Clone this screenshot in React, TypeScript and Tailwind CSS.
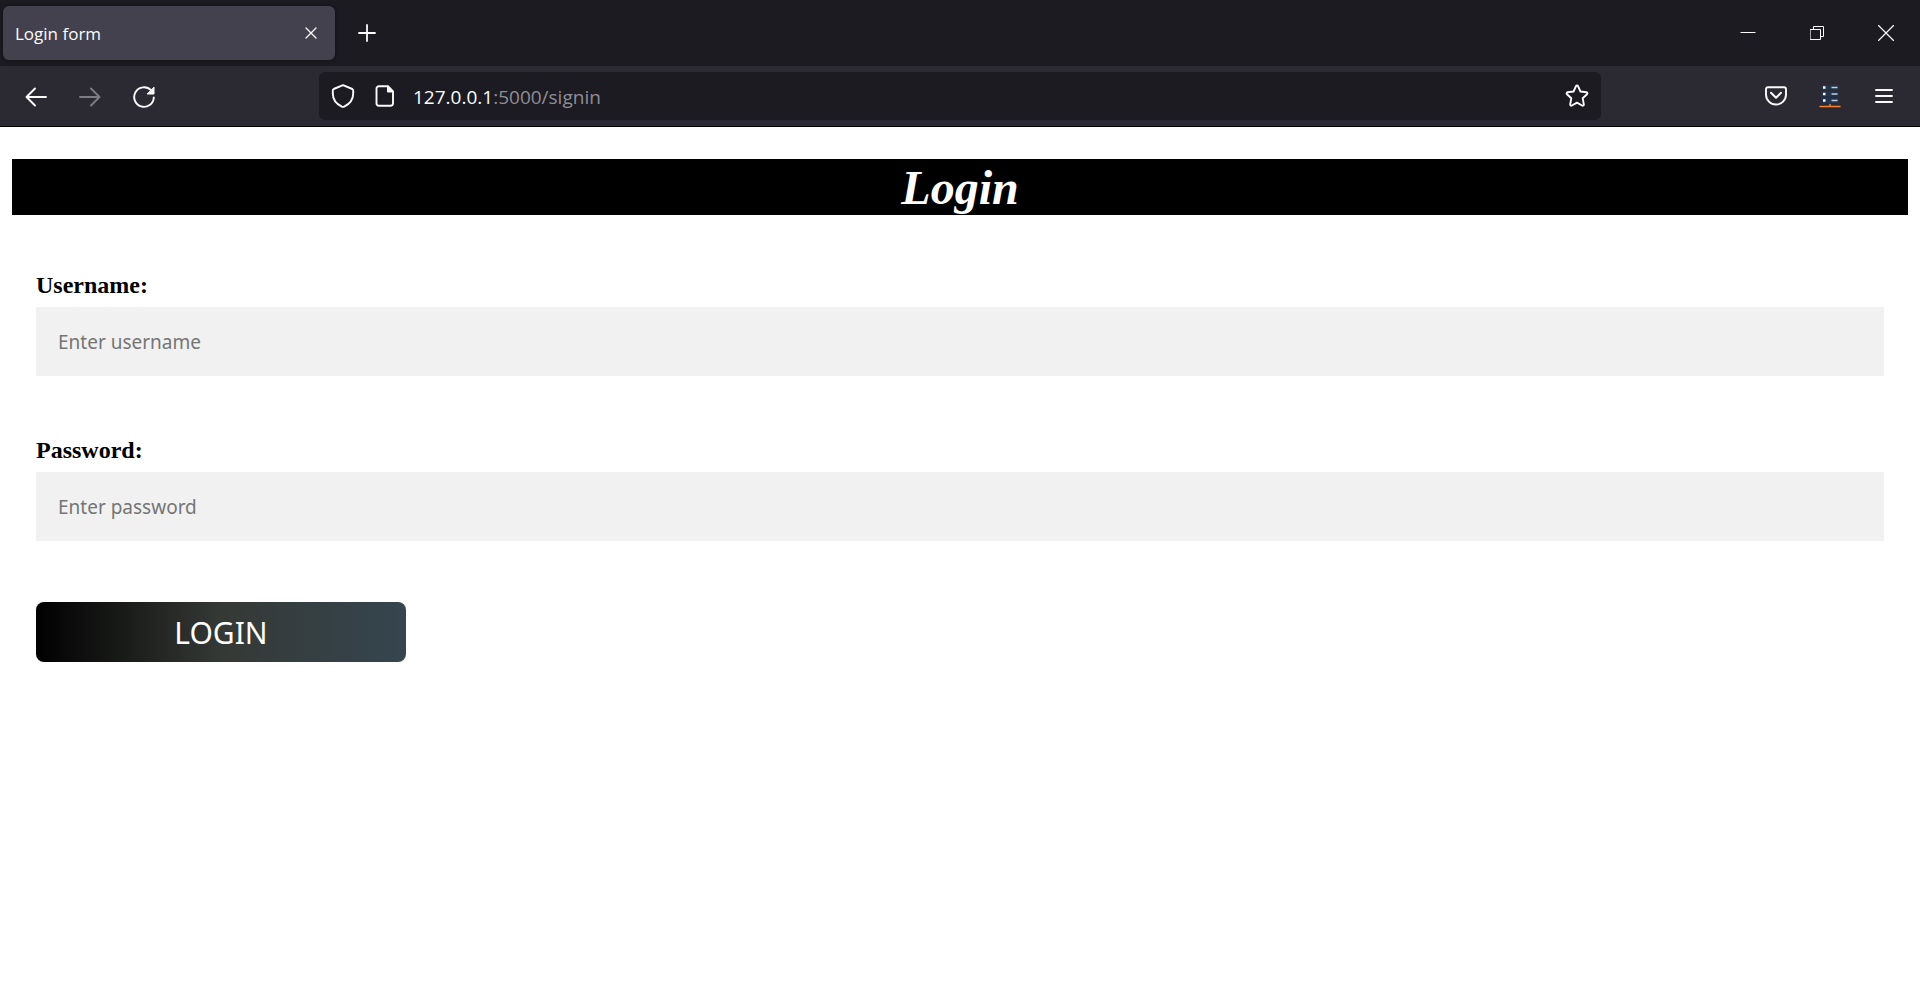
import React from "react";

type IconProps = { className?: string; children: React.ReactNode; box: string };

function Icon({ className = "", children, box }: IconProps) {
  return (
    <svg
      viewBox={box}
      fill="none"
      stroke="currentColor"
      strokeLinecap="round"
      strokeLinejoin="round"
      aria-hidden="true"
      className={`block shrink-0 ${className}`}
    >
      {children}
    </svg>
  );
}

function IconButton({
  label,
  className = "",
  children,
}: {
  label: string;
  className?: string;
  children: React.ReactNode;
}) {
  return (
    <button type="button" aria-label={label} className={`flex items-center justify-center ${className}`}>
      {children}
    </button>
  );
}

function TabBar() {
  return (
    <div className="flex h-[66px] items-center bg-[#1c1b22]">
      <div className="ml-[3px] flex h-[54px] w-[332px] items-center justify-between rounded-md bg-[#42414d] pr-2 pl-3 shadow-[0_0_4px_rgba(0,0,0,0.5)]">
        <span className="pt-0.5 text-[17px] leading-6">Login form</span>
        <IconButton label="Close tab" className="size-8">
          <Icon box="0 0 12 12" className="size-3">
            <path d="M1 1l10 10M11 1L1 11" strokeWidth="1.3" />
          </Icon>
        </IconButton>
      </div>
      <IconButton label="New tab" className="ml-4 size-8">
        <Icon box="0 0 18 18" className="size-[18px]">
          <path d="M9 1v16M1 9h16" strokeWidth="1.8" />
        </Icon>
      </IconButton>
      <div className="ml-auto flex h-full">
        <IconButton label="Minimize" className="w-[68px]">
          <Icon box="0 0 16 16" className="size-4">
            <path d="M0.5 7.5h15" strokeWidth="1" strokeLinecap="butt" />
          </Icon>
        </IconButton>
        <IconButton label="Restore" className="w-[70px]">
          <Icon box="0 0 14 14" className="size-3.5">
            <path d="M0.5 3.5h10v10h-10zM3.5 3.5v-3h10v10h-3" strokeWidth="1" strokeLinejoin="miter" />
          </Icon>
        </IconButton>
        <IconButton label="Close window" className="w-[68px]">
          <Icon box="0 0 16 16" className="size-4">
            <path d="M0.5 0.5l15 15M15.5 0.5l-15 15" strokeWidth="1.2" />
          </Icon>
        </IconButton>
      </div>
    </div>
  );
}

function Toolbar() {
  return (
    <div className="flex h-[61px] items-center border-b border-black bg-[#2b2a33]">
      <div className="flex w-[319px] shrink-0 items-center gap-[6px] pt-0.5 pl-3">
        <IconButton label="Back" className="size-12">
          <Icon box="0 0 22 20" className="h-5 w-[22px]">
            <path d="M1.5 10h19.5M10 1.5L1.5 10l8.5 8.5" strokeWidth="1.9" />
          </Icon>
        </IconButton>
        <IconButton label="Forward" className="size-12 text-[#7d7c83]">
          <Icon box="0 0 22 20" className="h-5 w-[22px]">
            <path d="M1 10h19.5M12 1.5l8.5 8.5l-8.5 8.5" strokeWidth="1.9" />
          </Icon>
        </IconButton>
        <IconButton label="Reload" className="size-12">
          <Icon box="0 0 22 22" className="size-[22px]">
            <path d="M20.8 11.5A9.8 9.8 0 1 1 18 4.2" strokeWidth="1.9" />
            <path d="M21 1.5v6.5h-6.500z" fill="currentColor" strokeWidth="1" />
          </Icon>
        </IconButton>
      </div>
      <div className="flex h-12 min-w-0 flex-1 items-center rounded-md bg-[#1c1b22] px-3">
        <IconButton label="Tracking protection">
          <Icon box="0 0 24 24" className="size-6">
            <path
              d="M12 1.2L21.3 5c.6.3.9.7.9 1.4v3.1c0 5.7-3.200 10.300-9 13.100-.8.4-1.600.4-2.400 0C5 19.800 1.800 15.200 1.800 9.500V6.400c0-.7.3-1.100.9-1.400z"
              strokeWidth="1.9"
            />
          </Icon>
        </IconButton>
        <IconButton label="Site information" className="ml-5">
          <Icon box="0 0 20 22" className="h-[22px] w-5">
            <path d="M13 1.200H4A2.500 2.500 0 0 0 1.500 3.700v14.600a2.500 2.500 0 0 0 2.500 2.500h11.500a2.500 2.500 0 0 0 2.500-2.500V6.500z" strokeWidth="1.9" />
            <path d="M12.500 1.500V7h5.500z" fill="currentColor" strokeWidth="1" />
          </Icon>
        </IconButton>
        <a href="#signin" className="ml-[18px] pt-0.5 text-[19px] leading-7 text-[#8f8e95]">
          <span className="text-[#fbfbfe]">127.0.0.1</span>:5000/signin
        </a>
        <IconButton label="Bookmark this page" className="ml-auto">
          <Icon box="0 0 24 24" className="size-6">
            <path
              d="M11 2.100c.4-.9 1.600-.9 2 0l2.500 5.400 5.900.7c1 .1 1.400 1.300.6 2l-4.300 4.100 1.100 6c.2 1-.8 1.700-1.700 1.200L12 18.600l-5.100 2.900c-.9.5-1.900-.2-1.700-1.200l1.100-6L2 10.200c-.8-.7-.4-1.900.6-2l5.900-.7z"
              strokeWidth="1.9"
            />
          </Icon>
        </IconButton>
      </div>
      <div className="flex w-[319px] shrink-0 items-center justify-end gap-[6px] pr-3">
        <IconButton label="Save to Pocket" className="size-12">
          <Icon box="0 0 22 20" className="h-5 w-[22px]">
            <path d="M3 1.200h16a2 2 0 0 1 2 2v5.300a10 10 0 0 1-20 0V3.200a2 2 0 0 1 2-2z" strokeWidth="1.9" />
            <path d="M6 6.800l5 5 5-5" strokeWidth="2" />
          </Icon>
        </IconButton>
        <IconButton label="Server extension" className="size-12">
          <Icon box="0 0 22 23" className="h-[23px] w-[22px]">
            <path d="M2.500 0h17v5h-17zM2.500 6.500h17v5h-17zM2.500 13h17v5h-17z" fill="#20344f" stroke="none" />
            <path d="M4 2.500h2.500M4 9h2.500M4 15.500h2.500" stroke="#ffffff" strokeWidth="2.500" strokeLinecap="butt" />
            <path d="M12.500 2.500h6M12.500 9h6M12.500 15.500h6" stroke="#c5ccd6" strokeWidth="1.300" strokeLinecap="butt" />
            <path d="M1 21.500h20M11 19.500v2" stroke="#f5822a" strokeWidth="1.500" />
          </Icon>
        </IconButton>
        <IconButton label="Open menu" className="size-12">
          <Icon box="0 0 18 16" className="h-4 w-[18px]">
            <path d="M1 2h16M1 8h16M1 14h16" strokeWidth="1.9" />
          </Icon>
        </IconButton>
      </div>
    </div>
  );
}

function Field({ id, label, placeholder, type }: { id: string; label: string; placeholder: string; type: string }) {
  return (
    <div>
      <label htmlFor={id} className="block font-['Liberation_Serif',serif] text-2xl leading-7 font-bold">
        {label}
      </label>
      <input
        id={id}
        name={id}
        type={type}
        placeholder={placeholder}
        className="mt-2 block h-[69px] w-full bg-[#f1f1f1] px-[22px] font-['Noto_Sans',sans-serif] text-[19px] outline-none placeholder:text-[#757575]"
      />
    </div>
  );
}

export default function App() {
  return (
    <div className="min-h-screen bg-white text-black">
      <header className="font-['Open_Sans',sans-serif] text-[#fbfbfe]">
        <TabBar />
        <Toolbar />
      </header>
      <main className="px-3 pt-8">
        <h1 className="bg-black pt-0.5 text-center font-['Liberation_Serif',serif] text-5xl leading-[54px] font-bold text-white italic">
          Login
        </h1>
        <form className="px-6 pt-14" onSubmit={(event) => event.preventDefault()}>
          <div className="flex flex-col gap-[60px]">
            <Field id="username" label="Username:" placeholder="Enter username" type="text" />
            <Field id="password" label="Password:" placeholder="Enter password" type="password" />
          </div>
          <button
            type="submit"
            className="mt-[61px] block h-[60px] w-[370px] rounded-lg bg-[linear-gradient(to_right,#000000,#353935,#36454f)] font-['Noto_Sans',sans-serif] text-[30px] text-white"
          >
            LOGIN
          </button>
        </form>
      </main>
    </div>
  );
}
